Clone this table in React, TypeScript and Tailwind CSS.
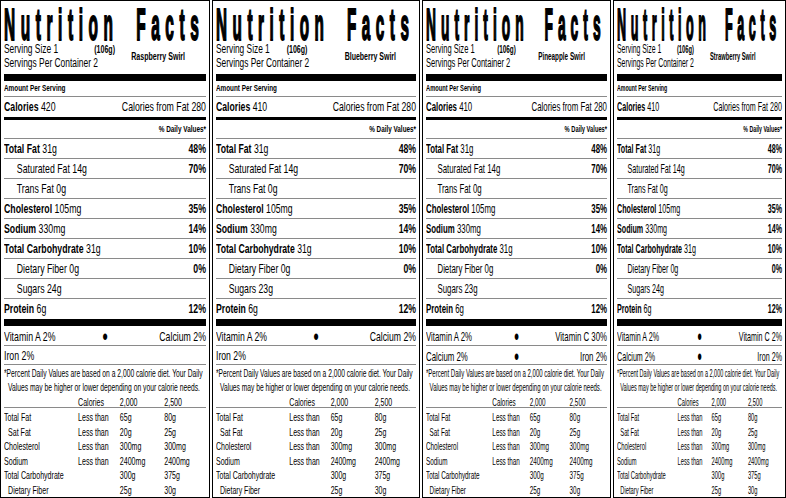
type Vitamin = [string, string | null];

interface PanelProps {
  width: string;
  scale: string;
  sizeGap: string;
  flavorGap: string;
  flavor: string;
  calories: string;
  sugars: string;
  vitamins: Vitamin[];
}

const panels: PanelProps[] = [
  {
    width: "w-[210px]",
    scale: "scale-x-[0.6733]",
    sizeGap: "w-[134px]",
    flavorGap: "w-[189px]",
    flavor: "Raspberry Swirl",
    calories: "420",
    sugars: "24g",
    vitamins: [
      ["Vitamin A 2%", "Calcium 2%"],
      ["Iron 2%", null],
    ],
  },
  {
    width: "w-[208px]",
    scale: "scale-x-[0.6667]",
    sizeGap: "w-[106px]",
    flavorGap: "w-[193px]",
    flavor: "Blueberry Swirl",
    calories: "410",
    sugars: "23g",
    vitamins: [
      ["Vitamin A 2%", "Calcium 2%"],
      ["Iron 2%", null],
    ],
  },
  {
    width: "w-[189px]",
    scale: "scale-x-[0.6033]",
    sizeGap: "w-[118px]",
    flavorGap: "w-[186px]",
    flavor: "Pineapple Swirl",
    calories: "410",
    sugars: "23g",
    vitamins: [
      ["Vitamin A 2%", "Vitamin C 30%"],
      ["Calcium 2%", "Iron 2%"],
    ],
  },
  {
    width: "w-[173px]",
    scale: "scale-x-[0.55]",
    sizeGap: "w-[109px]",
    flavorGap: "w-[169px]",
    flavor: "Strawberry Swirl",
    calories: "410",
    sugars: "24g",
    vitamins: [
      ["Vitamin A 2%", "Vitamin C 2%"],
      ["Calcium 2%", "Iron 2%"],
    ],
  },
];

type Nutrient = {
  label: string;
  amount: string;
  pct?: string;
  sub?: boolean;
};

function nutrients(sugars: string): Nutrient[] {
  return [
    { label: "Total Fat", amount: "31g", pct: "48%" },
    { label: "Saturated Fat", amount: "14g", pct: "70%", sub: true },
    { label: "Trans Fat", amount: "0g", sub: true },
    { label: "Cholesterol", amount: "105mg", pct: "35%" },
    { label: "Sodium", amount: "330mg", pct: "14%" },
    { label: "Total Carbohydrate", amount: "31g", pct: "10%" },
    { label: "Dietary Fiber", amount: "0g", pct: "0%", sub: true },
    { label: "Sugars", amount: sugars, sub: true },
  ];
}

const dailyTable: [string, string, string, string, boolean][] = [
  ["Total Fat", "Less than", "65g", "80g", false],
  ["Sat Fat", "Less than", "20g", "25g", true],
  ["Cholesterol", "Less than", "300mg", "300mg", false],
  ["Sodium", "Less than", "2400mg", "2400mg", false],
  ["Total Carbohydrate", "", "300g", "375g", false],
  ["Dietary Fiber", "", "25g", "30g", true],
];

function Panel(p: PanelProps) {
  return (
    <div className={`${p.width} shrink-0 overflow-hidden border border-black px-[3px]`}>
      <div className={`w-[300px] origin-left ${p.scale}`}>
        {/* title */}
        <div className="h-[39px] whitespace-nowrap">
          <div className="origin-left scale-x-[0.52] text-[44px] font-bold leading-[48px] tracking-[16px] [word-spacing:22px] [-webkit-text-stroke:2px_#000]">
            Nutrition Facts
          </div>
        </div>

        {/* serving info */}
        <div className="flex h-[28px] items-center">
          <div className={`${p.flavorGap} mt-[3px] shrink-0 text-[12.5px] leading-[14px]`}>
            <div className="flex items-baseline whitespace-nowrap">
              <span className={p.sizeGap}>Serving Size 1</span>
              <span className="text-[10.5px] font-bold">(106g)</span>
            </div>
            <div className="whitespace-nowrap">Servings Per Container 2</div>
          </div>
          <span className="whitespace-nowrap pt-[6px] text-[10.5px] font-bold">{p.flavor}</span>
        </div>

        <div className="mt-[6px] h-[7px] bg-black" />

        <div className="flex h-[16px] items-center border-b border-[#8a8a8a] text-[9.5px] font-bold">
          Amount Per Serving
        </div>

        <div className="flex h-[20px] items-center justify-between text-[13px]">
          <span>
            <b>Calories</b> {p.calories}
          </span>
          <span>Calories from Fat 280</span>
        </div>

        <div className="h-[3px] bg-black" />

        <div className="flex h-[19px] items-center justify-end border-b border-[#8a8a8a] text-[9.5px] font-bold">
          % Daily Values*
        </div>

        {nutrients(p.sugars).map((n) => (
          <div
            key={n.label}
            className="flex h-[20px] items-center justify-between border-b border-[#8a8a8a] text-[13px]"
          >
            {n.sub ? (
              <span className="pl-[19px]">
                {n.label} {n.amount}
              </span>
            ) : (
              <span>
                <b>{n.label}</b> {n.amount}
              </span>
            )}
            {n.pct && <b>{n.pct}</b>}
          </div>
        ))}

        <div className="flex h-[20px] items-center justify-between text-[13px]">
          <span>
            <b>Protein</b> 6g
          </span>
          <b>12%</b>
        </div>

        <div className="h-[7px] bg-black" />

        {p.vitamins.map(([left, right], i) => (
          <div
            key={left}
            className={`grid grid-cols-[1fr_auto_1fr] items-center border-b border-[#8a8a8a] text-[13px] ${
              i === 0 ? "h-[20px]" : "h-[19px]"
            }`}
          >
            <span>{left}</span>
            <span className="text-[22px] font-bold leading-none">{right ? "•" : ""}</span>
            <span className="text-right">{right ?? ""}</span>
          </div>
        ))}

        <div className="pt-[2px] text-[10px] leading-[14px] whitespace-nowrap">
          <div>*Percent Daily Values are based on a 2,000 calorie diet. Your Daily</div>
          <div className="pl-[6px]">Values may be higher or lower depending on your calorie needs.</div>
        </div>

        <div className="grid h-[13px] grid-cols-[110px_62px_66px_1fr] items-center border-b border-[#8a8a8a] text-[10.5px]">
          <span />
          <span>Calories</span>
          <span>2,000</span>
          <span>2,500</span>
        </div>

        <div className="pt-[2px] text-[10.5px]">
          {dailyTable.map(([label, limit, a, b, sub]) => (
            <div
              key={label}
              className="grid h-[14.5px] grid-cols-[110px_62px_66px_1fr] items-center whitespace-nowrap"
            >
              <span className={sub ? "pl-[6px]" : ""}>{label}</span>
              <span>{limit}</span>
              <span>{a}</span>
              <span>{b}</span>
            </div>
          ))}
        </div>
      </div>
    </div>
  );
}

export default function App() {
  return (
    <div className="flex h-[498px] w-[786px] items-start gap-[2px] overflow-hidden bg-white font-['Liberation_Sans',Arial,sans-serif] text-black">
      {panels.map((p) => (
        <Panel key={p.flavor} {...p} />
      ))}
    </div>
  );
}
